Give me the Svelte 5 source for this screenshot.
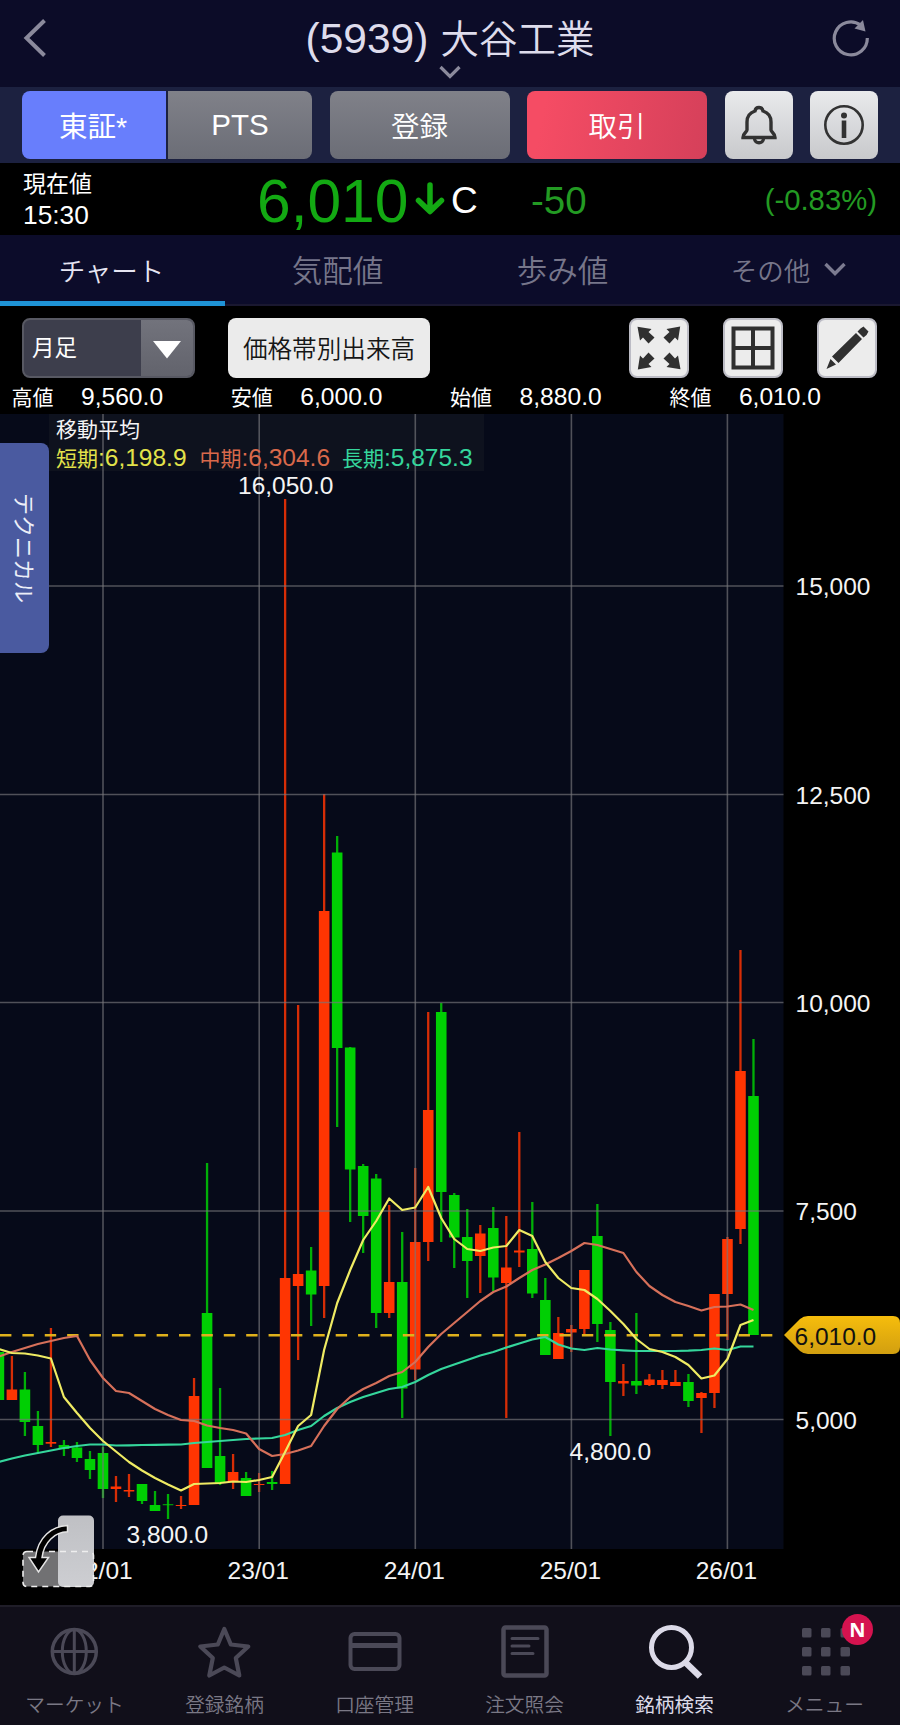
<script>
  const X0 = -1.1;
  const STEP = 13.01;
  const cx = (k) => X0 + STEP * k;

  // direction, high, low, body top, body bottom
  const candles = [
    ['d', 1352, 1400, 1352, 1400], ['u', 1356, 1400, 1389.5, 1400], ['d', 1372, 1436, 1389.5, 1422],
    ['d', 1411, 1453, 1426, 1445], ['u', 1328, 1447, 1442, 1443.7], ['d', 1440, 1456, 1445, 1449],
    ['d', 1442, 1462, 1447.5, 1458], ['d', 1451, 1479, 1459, 1470], ['d', 1447, 1498, 1453, 1489],
    ['u', 1476, 1502, 1486.5, 1489], ['u', 1474, 1497, 1490, 1491.5], ['d', 1484, 1504, 1484, 1501],
    ['d', 1491, 1511, 1505, 1511], ['d', 1494, 1519, 1504.3, 1505.2], ['u', 1496, 1509, 1505, 1506],
    ['u', 1378, 1505, 1396, 1505], ['d', 1163, 1468, 1313, 1468], ['d', 1388, 1485, 1456, 1483],
    ['u', 1454, 1489, 1472, 1482], ['d', 1472, 1496, 1478, 1496], ['u', 1473, 1492, 1484, 1485],
    ['d', 1471, 1490, 1482, 1484], ['u', 499, 1484, 1278, 1484], ['u', 1005, 1360, 1274, 1286],
    ['d', 1247, 1326, 1270.5, 1294.5], ['u', 794, 1318, 911, 1286], ['d', 836, 1127, 852.5, 1048],
    ['d', 1047, 1222, 1047.5, 1169.5], ['d', 1164, 1253, 1166, 1216], ['d', 1174, 1328, 1178.5, 1313],
    ['u', 1205, 1318, 1282, 1313], ['d', 1232, 1418, 1282, 1388.5], ['u', 1168, 1380, 1242, 1369.5],
    ['u', 1012, 1261, 1110, 1242], ['d', 1003, 1242, 1012, 1192], ['d', 1193, 1268, 1195, 1237.5],
    ['d', 1209, 1298, 1237, 1261], ['u', 1225, 1293, 1233.5, 1256], ['d', 1207, 1291, 1228, 1277.5],
    ['u', 1216, 1418, 1267.5, 1283], ['u', 1132, 1267, 1250.5, 1252.5], ['d', 1202, 1298, 1249, 1293.5],
    ['d', 1278, 1355, 1300, 1355], ['u', 1317, 1359, 1333, 1359], ['u', 1325, 1352, 1329, 1332.5],
    ['u', 1270, 1334, 1270, 1329], ['d', 1204, 1342, 1236, 1324], ['d', 1322, 1436, 1330, 1382],
    ['u', 1364, 1396, 1381, 1383.5], ['d', 1313, 1394, 1381, 1385.5], ['u', 1374, 1386, 1379.5, 1385],
    ['u', 1370, 1389, 1380, 1385], ['u', 1370, 1386, 1382, 1386], ['d', 1374, 1407, 1382, 1401],
    ['u', 1392, 1433, 1393, 1398], ['u', 1294, 1408, 1294, 1393], ['u', 1237, 1340, 1239, 1294],
    ['u', 950, 1244, 1071, 1229], ['d', 1039, 1335, 1096, 1335]
  ];

  const shortMA = [1349, 1353, 1353.5, 1355.5, 1358.5, 1397, 1413, 1428, 1441, 1451.5, 1462, 1470.5, 1478, 1484.5, 1490.5, 1484, 1483.5, 1483, 1481.5, 1482, 1480, 1477, 1452, 1426, 1415, 1350, 1303, 1270, 1240, 1221, 1198.5, 1210, 1207.5, 1187, 1218, 1239, 1249, 1251, 1247.5, 1246, 1230, 1236, 1262, 1278, 1288, 1290, 1299, 1311, 1324, 1339, 1349, 1352, 1357, 1365, 1378.5, 1375.5, 1359, 1325, 1320];
  const midMA = [1356.5, 1352, 1348, 1344, 1341, 1338, 1336, 1360, 1378, 1391, 1393, 1401, 1409, 1415, 1420, 1421, 1425.5, 1428, 1430, 1433.5, 1449, 1456, 1454, 1450.5, 1446, 1426, 1409, 1397, 1389, 1383, 1376, 1372, 1362, 1347, 1334, 1323, 1312, 1301, 1292, 1286.5, 1278, 1270, 1264.5, 1258, 1251, 1243, 1245, 1249, 1253, 1272, 1286, 1295, 1302, 1306, 1310.5, 1307, 1306.5, 1304.5, 1310];
  const longMA = [1462, 1458.5, 1455.5, 1453, 1450.5, 1448, 1446, 1444.5, 1444.5, 1445.5, 1445.3, 1445, 1444.8, 1444.6, 1444.5, 1443, 1442, 1441, 1440, 1439, 1438.5, 1438, 1435, 1430, 1426, 1416, 1408, 1402, 1397, 1393, 1389, 1387, 1382, 1375, 1369, 1364.5, 1360, 1355.5, 1352, 1347.5, 1343.5, 1339.5, 1337, 1344.5, 1348.5, 1350, 1348, 1349.5, 1350.3, 1351, 1351, 1351, 1351, 1350.7, 1350, 1348.5, 1350, 1346.5, 1346.5];
  const pts = (a) => a.map((y, k) => `${cx(k).toFixed(1)},${y}`).join(' ');

  const hGrid = [[586, '15,000'], [794.5, '12,500'], [1002.5, '10,000'], [1211, '7,500'], [1419.5, '5,000']];
  const vGrid = [[103, '22/01'], [259.2, '23/01'], [415.3, '24/01'], [571.4, '25/01'], [727.4, '26/01']];
  const ohlc = [['高値', '9,560.0'], ['安値', '6,000.0'], ['始値', '8,880.0'], ['終値', '6,010.0']];
  const nav = ['マーケット', '登録銘柄', '口座管理', '注文照会', '銘柄検索', 'メニュー'];
</script>

<div class="app">
  <header>
    <svg class="back" width="24" height="40" viewBox="0 0 24 40"><path d="M22.500 2.500 4.500 20 22.500 37.500" /></svg>
    <div class="title">
      <h1><span class="code">(5939)</span><span class="name">大谷工業</span></h1>
      <svg width="22" height="14" viewBox="0 0 22 14"><path d="M1.5 2 11 11.5 20.500 2" /></svg>
    </div>
    <svg class="reload" width="40" height="40" viewBox="0 0 40 40">
      <path d="M36.3 20A16.500 16.500 0 1 1 29.500 7" />
      <path class="head" d="M32 2 34.500 13.500 23.500 10.500Z" />
    </svg>
  </header>

  <div class="actions">
    <div class="seg"><button class="on">東証*</button><button class="gray latin">PTS</button></div>
    <button class="gray wide">登録</button>
    <button class="red wide">取引</button>
    <button class="sq">
      <svg width="40" height="42" viewBox="0 0 40 42">
        <path d="M20 3.500c-2.500 0-3.700 1.500-4 3.500-5 1.600-8 5.500-8 11v8c0 2-4 3-4 7.500h32c0-4.500-4-5.500-4-7.500v-8c0-5.500-3-9.400-8-11-.3-2-1.500-3.500-4-3.500Z" />
        <path d="M15.500 34.500c.3 5.600 8.700 5.600 9 0" />
      </svg>
    </button>
    <button class="sq">
      <svg width="42" height="42" viewBox="0 0 42 42">
        <circle cx="21" cy="21" r="18.700" />
        <circle class="fill" cx="21" cy="11.500" r="3" />
        <path class="fill" d="M18.700 16.500h4.600V34h-4.600z" />
      </svg>
    </button>
  </div>

  <div class="quote">
    <div class="now"><span>現在値</span><b>15:30</b></div>
    <div class="price">6,010</div>
    <svg class="arrow" width="30" height="36" viewBox="0 0 30 36"><path d="M15 4V30M3.500 19.500 15 30.500 26.500 19.500" /></svg>
    <div class="flag">C</div>
    <div class="diff">-50</div>
    <div class="pct">(-0.83%)</div>
  </div>

  <nav class="tabs">
    <div class="tab active">チャート</div>
    <div class="tab">気配値</div>
    <div class="tab">歩み値</div>
    <div class="tab other">その他<svg width="22" height="14" viewBox="0 0 22 14"><path d="M1.500 2 11 11.500 20.500 2" /></svg></div>
  </nav>

  <div class="tools">
    <div class="select"><span>月足</span><i><svg width="28" height="18" viewBox="0 0 28 18"><path d="M0 0H28L14 17.500Z" /></svg></i></div>
    <button class="volume">価格帯別出来高</button>
    <div class="icons">
      <button>
        <svg width="44" height="44" viewBox="0 0 44 44">
          {#each [0, 90, 180, 270] as r}
            <path transform="rotate({r} 22 22)" d="M.5 .8 14.500 3 11.500 6 17.500 11.500 11.500 17.500 6 11.500 3 14.500Z" />
          {/each}
        </svg>
      </button>
      <button>
        <svg width="44" height="44" viewBox="0 0 44 44"><path class="line" d="M2.500 2.500h39v39h-39zM22 2.500v39M2.500 22h39" /></svg>
      </button>
      <button>
        <svg width="44" height="44" viewBox="0 0 44 44">
          <path d="M35.500 2.500 38.500 .5 43.500 5.500 41.500 9 38.500 11.500 32.500 5.500ZM31 7 37 13 13.500 37 7 30.500ZM5.500 33 11 38.500 1.500 43Z" />
        </svg>
      </button>
    </div>
  </div>

  <div class="ohlc">
    {#each ohlc as [label, value]}
      <div><span>{label}</span><b>{value}</b></div>
    {/each}
  </div>

  <main>
    <svg class="chart" width="900" height="1191" viewBox="0 414 900 1191">
      <rect x="0" y="414" width="783.500" height="1135" fill="#060a19" />
      <rect x="49" y="414" width="435" height="57" fill="#0e121e" />
      {#each candles as [dir, high, low, top, bottom], k}
        <g class={dir}>
          <rect x={cx(k) - 1.15} y={high} width="2.300" height={low - high} opacity=".84" />
          <rect x={cx(k) - 5.300} y={top} width="10.600" height={bottom - top} />
        </g>
      {/each}
      <g class="grid">
        {#each hGrid as [y]}<line x1="0" x2="783.500" y1={y} y2={y} />{/each}
        {#each vGrid as [x]}<line x1={x} x2={x} y1="414" y2="1549" />{/each}
      </g>
      <line x1="0" x2="774" y1="1335.200" y2="1335.200" stroke="#e0b11c" stroke-width="2.500" stroke-dasharray="11.400 10.980" />
      <polyline points={pts(longMA)} stroke="#35d69c" />
      <polyline points={pts(midMA)} stroke="#d6705a" />
      <polyline points={pts(shortMA)} stroke="#efeb63" />

      <text class="cjk" x="56" y="436.500">移動平均</text>
      <text class="short" x="56" y="465.500"><tspan class="cjk">短期</tspan>:6,198.9</text>
      <text class="mid" x="199.500" y="465.500"><tspan class="cjk">中期</tspan>:6,304.6</text>
      <text class="long" x="342" y="465.500"><tspan class="cjk">長期</tspan>:5,875.3</text>

      <text x="238" y="493.500">16,050.0</text>
      <text x="126.500" y="1543">3,800.0</text>
      <text x="569.500" y="1460">4,800.0</text>
      {#each hGrid as [y, label]}<text x="795.500" y={y + 9.3}>{label}</text>{/each}
      {#each vGrid as [x, label]}<text x={x - 1} y="1579.300" text-anchor="middle">{label}</text>{/each}

      <defs>
        <linearGradient id="gold" x1="0" y1="0" x2="0" y2="1"><stop offset="0" stop-color="#f6bd0c" /><stop offset="1" stop-color="#d29f10" /></linearGradient>
        <linearGradient id="panel" x1="0" y1="0" x2="0" y2="1"><stop offset="0" stop-color="#bfc0c4" /><stop offset="1" stop-color="#cdced2" /></linearGradient>
      </defs>
      <path d="M784 1335 800 1319Q803.500 1316 808 1316H893Q900 1316 900 1323V1347Q900 1354 893 1354H808Q803.500 1354 800 1351Z" fill="url(#gold)" />
      <text x="794.500" y="1344.500" class="tagtext">6,010.0</text>

      <g>
        <rect x="23" y="1551.500" width="70" height="35" rx="4" fill="#717173" />
        <rect x="58" y="1515.500" width="36" height="71.500" rx="5" fill="url(#panel)" />
        <rect x="23" y="1551.500" width="70.500" height="35" rx="4" fill="none" stroke="#eee" stroke-width="1.600" stroke-dasharray="6 5" />
        <path d="M67.500 1525.500C52 1526 38 1537 35.500 1557.500L29 1557.500 38.500 1572 48.500 1557.500 42 1557.500C44 1542 55 1532 67.500 1531.800Z" fill="#000" stroke="#e4e4e4" stroke-width="1.500" />
      </g>
    </svg>
    <div class="technical">テクニカル</div>
  </main>

  <footer>
    {#each nav as label, i}
      <div class="item" class:sel={i === 4}>
        <svg width="56" height="56" viewBox="0 0 56 56">
          {#if i === 0}
            <g stroke-width="3"><circle cx="27.300" cy="27.500" r="22" stroke-width="3.500" /><ellipse cx="27.300" cy="27.500" rx="12" ry="22" /><path d="M27.300 5.500V49.500M5.300 27.500H49.300" /></g>
          {:else if i === 1}
            <path transform="translate(-.7 0)" stroke-width="4.200" stroke-linejoin="round" d="M28 5 34.500 20.500 52 22.500 39.500 34 43 51.500 28 43.500 13 51.500 16.500 34 4 22.500 21.500 20.500Z" />
          {:else if i === 2}
            <rect x="3.500" y="10" width="49" height="35" rx="4" stroke-width="4" /><path stroke-width="5" d="M3 21.500H53" />
          {:else if i === 3}
            <rect x="6.500" y="3.500" width="43" height="48" rx="2" stroke-width="4.500" /><path stroke-width="3" stroke-linecap="round" d="M15 14.500H41M15 22H32M15 29.500H36" />
          {:else if i === 4}
            <circle cx="24.500" cy="23.500" r="20" stroke-width="5" /><path stroke-width="6.500" d="M38 38 53 52.500" />
          {:else}
            {#each [4, 23, 42] as y}{#each [5, 24, 43.500] as x}<rect class="dot" {x} {y} width="9.500" height="9.500" rx="1.500" />{/each}{/each}
          {/if}
        </svg>
        <span>{label}</span>
        {#if i === 5}<em>N</em>{/if}
      </div>
    {/each}
  </footer>
</div>

<style>
  :global(body) { margin: 0; background: #000; }
  .app {
    width: 900px; height: 1725px; display: flex; flex-direction: column; overflow: hidden;
    background: #000; color: #fff; font-family: "Liberation Sans", "Noto Sans CJK JP", sans-serif;
    font-weight: 400;
  }
  .app * { box-sizing: border-box; }
  svg { display: block; flex: none; }
  button { border: 0; padding: 0; font: inherit; color: #fff; }
  b, h1 { font-weight: 350; margin: 0; }

  header { height: 87px; background: #0c0c28; display: flex; justify-content: space-between; padding: 18px 29px 0 22px; }
  header svg { fill: none; stroke: #8b8a9c; stroke-width: 3.2; }
  header .back { stroke-width: 4; }
  .title { display: flex; flex-direction: column; align-items: center; margin-left: 23px; }
  h1 { height: 47px; line-height: 42px; display: flex; color: #dedcec; white-space: nowrap; }
  .code { font-size: 42.5px; margin-right: 12px; }
  .name { font-size: 38.5px; font-family: "Noto Sans CJK JP", sans-serif; line-height: 37px; }
  .reload .head { fill: #8b8a9c; stroke: none; }

  .actions { height: 76px; background: #1c2140; display: flex; align-items: center; padding: 0 22px 0 22px; justify-content: space-between; }
  .actions button { height: 68px; border-radius: 8px; font-size: 28.5px; font-weight: 350; display: flex; align-items: center; justify-content: center; padding-bottom: 2px; }
  .actions .sq { padding-bottom: 0; }
  .seg { display: flex; gap: 2px; }
  .seg button { width: 144px; }
  .actions .on { background: #687efc; border-radius: 8px 0 0 8px; font-weight: 400; padding-right: 2px; }
  .actions .gray { background: linear-gradient(#808189, #6b6d76); }
  .actions .latin { border-radius: 0 8px 8px 0; font-size: 29.5px; padding-bottom: 0; }
  .wide { width: 180px; }
  .actions .red { background: linear-gradient(100deg, #f54c64 10%, #d5405a); }
  .sq { width: 68px; background: linear-gradient(#e9eaec, #c8c9cc); }
  .sq svg { fill: none; stroke: #323232; stroke-width: 3.4; }
  .sq circle { stroke-width: 2.6; }
  .sq .fill { fill: #323232; stroke: none; }

  .quote { height: 72px; display: flex; align-items: center; padding: 0 23px 0 23px; color: #13a913; }
  .now { width: 234px; color: #fff; display: flex; flex-direction: column; font-size: 23px; line-height: 30px; padding-top: 1px; }
  .now b { font-size: 26.3px; line-height: 32px; }
  .price { font-size: 60.5px; width: 158px; line-height: 72px; padding-top: 3px; }
  .flag { color: #fff; font-size: 37px; width: 77px; margin-left: 6px; padding-top: 3px; }
  .arrow { fill: none; stroke: #13a913; stroke-width: 5.5; stroke-linecap: round; stroke-linejoin: round; }
  .diff { font-size: 38.5px; color: #239a23; padding-left: 3px; padding-top: 3px; }
  .pct { font-size: 29.3px; color: #239a23; margin-left: auto; padding-top: 2px; }

  .tabs { height: 71px; background: #0c0c2a; border-bottom: 2px solid #1a1830; display: grid; grid-template-columns: repeat(4, 225px); }
  .tab { height: 71px; display: flex; align-items: center; justify-content: center; font-size: 30.5px; font-weight: 350; color: #77768a; padding-bottom: 3px; }
  .active { color: #e6e5f2; font-size: 26.5px; border-bottom: 5px solid #1f93d6; padding: 3px 2px 0 0; }
  .other { font-size: 26.5px; gap: 14px; padding-left: 2px; }
  .other svg { fill: none; stroke: #7c7b90; stroke-width: 3.4; }

  .tools { height: 77px; padding: 12px 23px 0 22px; display: flex; align-items: flex-start; }
  .select { width: 173px; height: 60px; border: 2px solid #585963; border-radius: 8px; background: #3d3e4c; display: flex; overflow: hidden; font-size: 22.5px; line-height: 58px; }
  .select span { width: 117px; padding-left: 8px; }
  .select i { flex: 1; background: linear-gradient(#72737c, #62636c); display: flex; align-items: center; justify-content: center; }
  .select svg { margin-top: 4px; }
  .select path { fill: #fff; }
  .volume { width: 202px; height: 60px; margin-left: 33px; border-radius: 8px; background: #ebebeb; color: #161616; font-size: 24.6px; font-weight: 350; padding-bottom: 3px; }
  .icons { margin-left: auto; display: flex; gap: 34px; }
  .icons button { width: 60px; height: 60px; border-radius: 8px; background: #ececec; border: 2px solid #bcbcc5; display: flex; align-items: center; justify-content: center; }
  .icons path { fill: #303030; }
  .icons .line { fill: none; stroke: #303030; stroke-width: 4; }

  .ohlc { height: 31px; display: flex; padding-left: 11.5px; align-items: center; }
  .ohlc div { width: 219.3px; display: flex; align-items: baseline; line-height: 30px; padding-bottom: 3px; }
  .ohlc span { width: 69.5px; font-size: 21px; }
  .ohlc b { font-size: 24.6px; }

  main { height: 1191px; position: relative; }
  .chart text { font-size: 24.5px; fill: #f4f4f4; }
  .chart .short { fill: #e2e24a; }
  .chart .mid { fill: #d9694b; }
  .chart .long { fill: #35d69c; }
  .chart .cjk { font-size: 21px; }
  .chart .tagtext { fill: #111; }
  .chart polyline { fill: none; stroke-width: 2.2; stroke-linejoin: round; }
  .grid line { stroke: #77777b; stroke-width: 1.6; stroke-opacity: .66; }
  .u { fill: #ff3502; }
  .d { fill: #00cf03; }
  .technical {
    position: absolute; left: 0; top: 29px; width: 49px; height: 210px; border-radius: 0 8px 8px 0;
    background: #4a5aa0; writing-mode: vertical-rl; text-orientation: sideways; padding-left: 2px;
    display: flex; align-items: center; justify-content: center; font-size: 22px; color: #eceef8;
  }

  footer { height: 120px; background: #110f1a; border-top: 2px solid #1f1d28; display: grid; grid-template-columns: repeat(6, 150px); }
  .item { display: flex; flex-direction: column; align-items: center; padding-top: 17px; color: #7a7885; font-size: 19.7px; font-weight: 350; position: relative; }
  .item span { line-height: 30px; margin-top: 10px; margin-right: 1px; white-space: nowrap; }
  .item svg { fill: none; stroke: #4b4957; }
  .item .dot { fill: #4b4957; stroke: none; }
  .item.sel { color: #dcdae8; font-weight: 400; }
  .item.sel svg { stroke: #dcdae8; }
  em { position: absolute; left: 92px; top: 7px; width: 31px; height: 31px; border-radius: 50%; background: #d5134f; color: #fff; font: bold 20px/31px "Open Sans", sans-serif; text-align: center; }
</style>
